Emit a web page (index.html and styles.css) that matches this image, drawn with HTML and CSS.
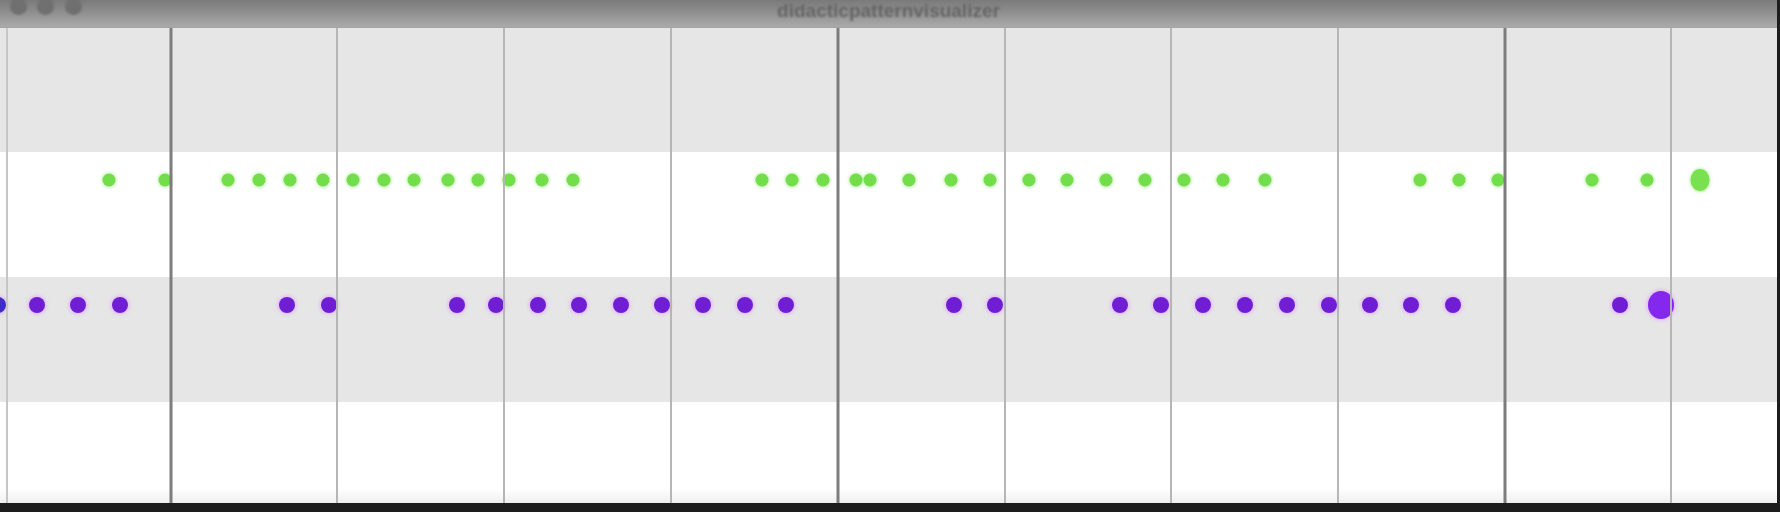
FILE: index.html
```html
<!DOCTYPE html>
<html lang="en">
<head>
<meta charset="utf-8">
<title>didacticpatternvisualizer</title>
<link rel="stylesheet" href="styles.css">
</head>
<body>
<div class="window">
  <header class="titlebar">
    <div class="lights">
      <span class="light"></span>
      <span class="light"></span>
      <span class="light"></span>
    </div>
    <div class="title">didacticpatternvisualizer</div>
    <div class="spacer"></div>
  </header>
  <main class="canvas">
    <div class="lanes">
      <div class="lane lane-grey lane-top"></div>
      <div class="lane lane-white">
        <span class="dot green" style="left:109px"></span>
        <span class="dot green" style="left:165px"></span>
        <span class="dot green" style="left:228px"></span>
        <span class="dot green" style="left:259px"></span>
        <span class="dot green" style="left:290px"></span>
        <span class="dot green" style="left:323px"></span>
        <span class="dot green" style="left:353px"></span>
        <span class="dot green" style="left:384px"></span>
        <span class="dot green" style="left:414px"></span>
        <span class="dot green" style="left:448px"></span>
        <span class="dot green" style="left:478px"></span>
        <span class="dot green" style="left:509px"></span>
        <span class="dot green" style="left:542px"></span>
        <span class="dot green" style="left:573px"></span>
        <span class="dot green" style="left:762px"></span>
        <span class="dot green" style="left:792px"></span>
        <span class="dot green" style="left:823px"></span>
        <span class="dot green" style="left:856px"></span>
        <span class="dot green" style="left:870px"></span>
        <span class="dot green" style="left:909px"></span>
        <span class="dot green" style="left:951px"></span>
        <span class="dot green" style="left:990px"></span>
        <span class="dot green" style="left:1029px"></span>
        <span class="dot green" style="left:1067px"></span>
        <span class="dot green" style="left:1106px"></span>
        <span class="dot green" style="left:1145px"></span>
        <span class="dot green" style="left:1184px"></span>
        <span class="dot green" style="left:1223px"></span>
        <span class="dot green" style="left:1265px"></span>
        <span class="dot green" style="left:1420px"></span>
        <span class="dot green" style="left:1459px"></span>
        <span class="dot green" style="left:1498px"></span>
        <span class="dot green" style="left:1592px"></span>
        <span class="dot green" style="left:1647px"></span>
        <span class="dot green big" style="left:1700px"></span>
      </div>
      <div class="lane lane-grey">
        <span class="dot purple past" style="left:-2px"></span>
        <span class="dot purple" style="left:37px"></span>
        <span class="dot purple" style="left:78px"></span>
        <span class="dot purple" style="left:120px"></span>
        <span class="dot purple" style="left:287px"></span>
        <span class="dot purple" style="left:329px"></span>
        <span class="dot purple" style="left:457px"></span>
        <span class="dot purple" style="left:496px"></span>
        <span class="dot purple" style="left:538px"></span>
        <span class="dot purple" style="left:579px"></span>
        <span class="dot purple" style="left:621px"></span>
        <span class="dot purple" style="left:662px"></span>
        <span class="dot purple" style="left:703px"></span>
        <span class="dot purple" style="left:745px"></span>
        <span class="dot purple" style="left:786px"></span>
        <span class="dot purple" style="left:954px"></span>
        <span class="dot purple" style="left:995px"></span>
        <span class="dot purple" style="left:1120px"></span>
        <span class="dot purple" style="left:1161px"></span>
        <span class="dot purple" style="left:1203px"></span>
        <span class="dot purple" style="left:1245px"></span>
        <span class="dot purple" style="left:1287px"></span>
        <span class="dot purple" style="left:1329px"></span>
        <span class="dot purple" style="left:1370px"></span>
        <span class="dot purple" style="left:1411px"></span>
        <span class="dot purple" style="left:1453px"></span>
        <span class="dot purple" style="left:1620px"></span>
        <span class="dot purple big" style="left:1661px"></span>
      </div>
      <div class="lane lane-white lane-bottom"></div>
    </div>
    <div class="beats">
      <span class="beat edge" style="left:7px"></span>
      <span class="beat bar" style="left:171px"></span>
      <span class="beat" style="left:337px"></span>
      <span class="beat" style="left:504px"></span>
      <span class="beat" style="left:671px"></span>
      <span class="beat bar" style="left:838px"></span>
      <span class="beat" style="left:1005px"></span>
      <span class="beat" style="left:1171px"></span>
      <span class="beat" style="left:1338px"></span>
      <span class="beat bar" style="left:1505px"></span>
      <span class="beat" style="left:1671px"></span>
    </div>
  </main>
</div>
</body>
</html>
```
FILE: styles.css
```css
html, body {
  margin: 0;
  padding: 0;
}

body {
  width: 1780px;
  height: 512px;
  background: #1d1d1d;
  overflow: hidden;
  font-family: "Liberation Sans", Arial, sans-serif;
}

.window {
  width: 1777px;
  height: 503px;
  display: flex;
  flex-direction: column;
  background: #ffffff;
  overflow: hidden;
}

.titlebar {
  height: 28px;
  flex: none;
  display: grid;
  grid-template-columns: 1fr auto 1fr;
  align-items: start;
  background: linear-gradient(#7a7a7a, #8c8c8c 40%, #aaaaaa);
  border-bottom: 1px solid #a4a4a4;
  box-sizing: border-box;
}

.lights {
  display: flex;
  gap: 10.5px;
  padding-left: 9.5px;
  margin-top: -2px;
}

.light {
  width: 17px;
  height: 17px;
  border-radius: 50%;
  background: #6f6f6f;
  filter: blur(1.2px);
}

.title {
  font-size: 19px;
  font-weight: bold;
  line-height: 19px;
  color: #646464;
  margin-top: 1px;
  filter: blur(1px);
}

.canvas {
  flex: 1;
  position: relative;
}

.lanes {
  display: flex;
  flex-direction: column;
  height: 100%;
}

.lane {
  position: relative;
  height: 125px;
  flex: none;
}

.lane-top {
  height: 124px;
  background: linear-gradient(#dadada, #e3e3e3 35px, #e7e7e7);
}

.lane-grey {
  background: #e6e6e6;
}

.lane-white {
  background: #ffffff;
}

.lane-bottom {
  flex: 1;
  background: linear-gradient(#ffffff, #ffffff 86px, #f0f0f0);
}

.dot {
  position: absolute;
  top: 28px;
  border-radius: 50%;
  transform: translate(-50%, -50%);
}

.dot.green {
  width: 13px;
  height: 13px;
  background: #74dd4c;
  box-shadow: 0 0 3px 1px rgba(150, 235, 120, 0.55);
  filter: blur(0.5px);
}

.dot.purple {
  width: 16px;
  height: 16px;
  background: #701ed4;
  box-shadow: 0 0 3px 2px rgba(225, 180, 250, 0.7);
  filter: blur(0.5px);
}

.dot.purple.past {
  background: #3d2dc6;
}

.dot.green.big {
  width: 19px;
  height: 22px;
  background: #79e050;
}

.dot.purple.big {
  width: 26px;
  height: 28px;
  background: #8428ee;
}

.beats {
  position: absolute;
  inset: 0;
  pointer-events: none;
}

.beat {
  position: absolute;
  top: 0;
  bottom: 0;
  width: 2px;
  transform: translateX(-50%);
  background: #b6b6b6;
}

.beat.bar {
  width: 3px;
  background: #7d7d7d;
}

.beat.edge {
  width: 2px;
  background: #c6c6c6;
}
```
